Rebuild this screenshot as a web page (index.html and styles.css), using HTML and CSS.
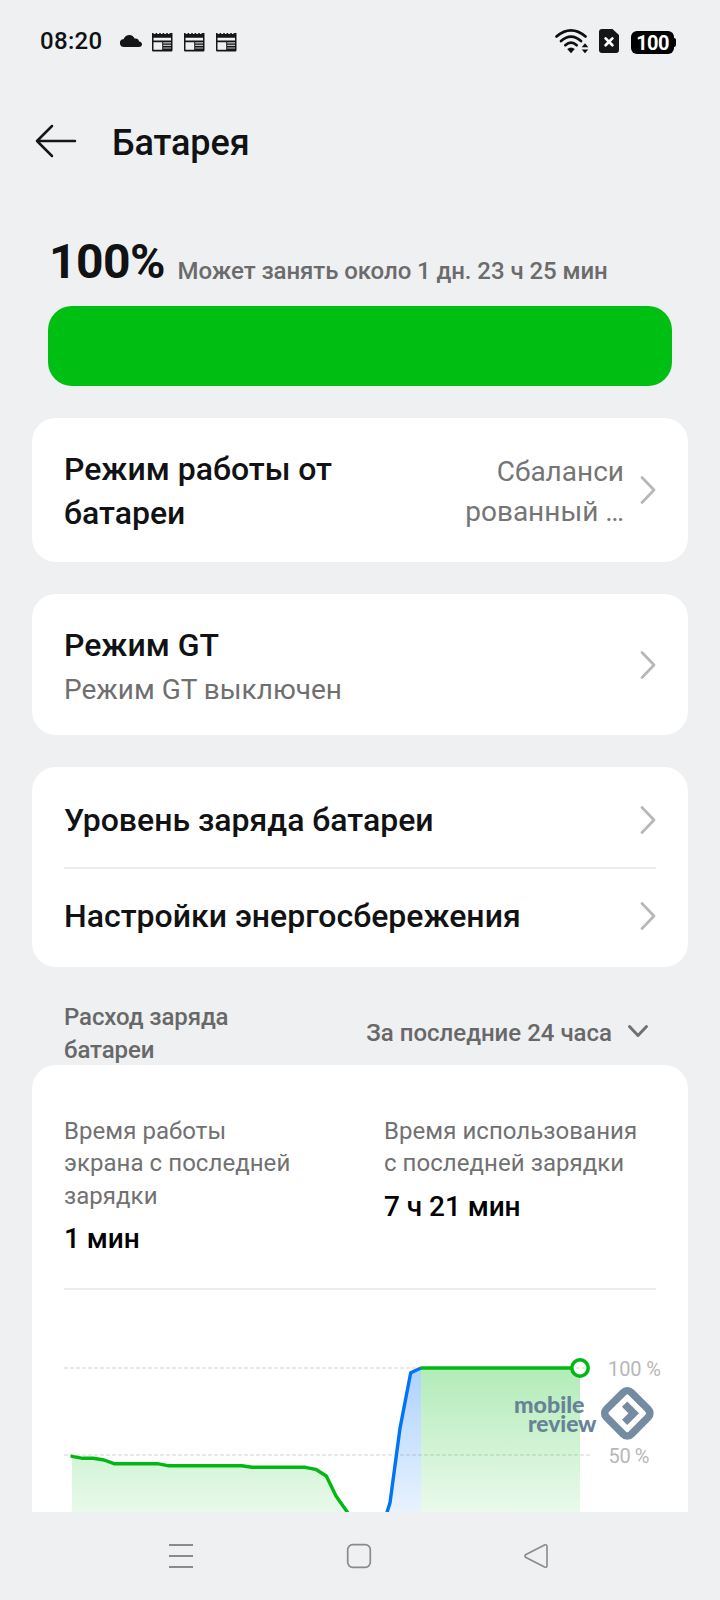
FILE: index.html
```html
<!DOCTYPE html>
<html lang="ru">
<head>
<meta charset="utf-8">
<title>Батарея</title>
<link rel="stylesheet" href="styles.css">
</head>
<body>
<svg class="defs" width="0" height="0" aria-hidden="true">
  <symbol id="news" viewBox="0 0 21 19">
    <path d="M0 0h1.600v1h2V0h1.600v1h2V0h1.600v1h1.800V0h1.600v1h2V0h1.600v1h1.800V0H20.500v17.200a1.200 1.200 0 0 1-1.200 1.200H1.200A1.200 1.200 0 0 1 0 17.200z" fill="#151617"/>
    <path d="M1.500 4.700h17.500v2.800H1.500zM1.500 9.200h8.700v7.600H1.500z" fill="#eff0f2"/>
    <path d="M11.200 9.800H19M11.200 12.400H19M11.200 15H19" stroke="#c4c5c6" stroke-width="1.200"/>
  </symbol>
  <symbol id="chevron" viewBox="0 0 16 28">
    <path d="M2 1.500 14 14 2 26.500" fill="none" stroke="#b7b7b8" stroke-width="2.700" stroke-linecap="round" stroke-linejoin="round"/>
  </symbol>
</svg>
<main class="screen">
  <header class="status">
    <span class="clock">08:20</span>
    <svg class="cloud" viewBox="0 0 22 12"><path d="M4 12a4 4 0 0 1-.3-8C4.600 1.500 7 0 9.300 0c2.700 0 4.500 1.500 5.300 3.600 2.600-.4 4.200 1 4.500 2.900C21 6.700 22 7.900 22 9.300 22 10.900 20.800 12 19 12z" fill="#151617"/></svg>
    <svg class="news"><use href="#news"/></svg>
    <svg class="news"><use href="#news"/></svg>
    <svg class="news"><use href="#news"/></svg>
    <span class="grow"></span>
    <svg class="wifi" viewBox="0 0 34 25">
      <g fill="none" stroke="#0d0e0f" stroke-width="2.700" stroke-linecap="round">
        <path d="M1.500 7.500Q16 -4.600 30.500 7.500"/><path d="M6 12Q16 3.300 26 12"/><path d="M10.300 16.200Q16 11.200 21.700 16.200"/>
      </g>
      <path d="M12.200 20Q16 16.800 19.800 20L16 24.200z" fill="#0d0e0f"/>
      <path d="M30 14.200 33.300 18.300H26.700zM30 24.200 33.300 20.400H26.700z" fill="#0d0e0f"/>
    </svg>
    <svg class="sim" viewBox="0 0 20 24"><path d="M3 0h10.500L20 6v15a3 3 0 0 1-3 3H3a3 3 0 0 1-3-3V3a3 3 0 0 1 3-3z" fill="#151617"/><path d="m6.600 9.400 6.800 6.800m0-6.800-6.800 6.800" stroke="#fff" stroke-width="2.700" stroke-linecap="round"/></svg>
    <span class="battery">100</span>
  </header>

  <div class="titlebar">
    <svg class="back" viewBox="0 0 42 34"><path d="M40 17H2M17 2 2 17l15 15" fill="none" stroke="#151617" stroke-width="2.500" stroke-linecap="round" stroke-linejoin="round"/></svg>
    <h1 class="title">Батарея</h1>
  </div>

  <section class="level">
    <div class="level-text"><span class="percent">100%</span><span class="remaining">Может занять около 1 дн. 23 ч 25 мин</span></div>
    <div class="level-bar"></div>
  </section>

  <section class="card card-mode">
    <div class="label">Режим работы от<br>батареи</div>
    <div class="value">Сбаланси<br>рованный …</div>
    <svg class="chevron"><use href="#chevron"/></svg>
  </section>

  <section class="card card-gt">
    <div class="label-group"><div class="label">Режим GT</div><div class="sub">Режим GT выключен</div></div>
    <svg class="chevron"><use href="#chevron"/></svg>
  </section>

  <section class="card card-list">
    <div class="row"><div class="label">Уровень заряда батареи</div><svg class="chevron"><use href="#chevron"/></svg></div>
    <div class="row"><div class="label">Настройки энергосбережения</div><svg class="chevron"><use href="#chevron"/></svg></div>
  </section>

  <div class="usage-head">
    <div class="usage-title">Расход заряда<br>батареи</div>
    <div class="period">За последние 24 часа</div>
    <svg class="drop" viewBox="0 0 22 14"><path d="m2.500 2.500 8.500 9 8.500-9" fill="none" stroke="#707172" stroke-width="3" stroke-linecap="round" stroke-linejoin="round"/></svg>
  </div>

  <section class="usage">
    <div class="stats">
      <div class="stat"><div class="stat-name">Время работы<br>экрана с последней<br>зарядки</div><div class="stat-value">1 мин</div></div>
      <div class="stat"><div class="stat-name">Время использования<br>с последней зарядки</div><div class="stat-value">7 ч 21 мин</div></div>
    </div>
    <svg class="chart" viewBox="32 1290 656 222">
      <defs>
        <linearGradient id="green" gradientUnits="userSpaceOnUse" x1="0" y1="1368" x2="0" y2="1512"><stop offset="0" stop-color="#00bd13" stop-opacity=".3"/><stop offset="1" stop-color="#00bd13" stop-opacity=".08"/></linearGradient>
        <linearGradient id="leftgreen" gradientUnits="userSpaceOnUse" x1="0" y1="1456" x2="0" y2="1512"><stop offset="0" stop-color="#00bd13" stop-opacity=".17"/><stop offset="1" stop-color="#00bd13" stop-opacity=".09"/></linearGradient>
        <linearGradient id="blue" gradientUnits="userSpaceOnUse" x1="0" y1="1368" x2="0" y2="1512"><stop offset="0" stop-color="#0073f7" stop-opacity=".32"/><stop offset="1" stop-color="#0073f7" stop-opacity=".09"/></linearGradient>
      </defs>
      <path d="M64 1368H590M64 1455H590" stroke="#e2e2e2" stroke-width="1.600" stroke-dasharray="4 2"/>
      <path d="M72 1456.300 82.700 1458.300H93.300L104 1460 114 1463.700H157.300L167.700 1465.700H241.700L252 1467.300H305.300L315.700 1469.300 326.300 1476 336 1496 347.700 1513H72z" fill="url(#leftgreen)"/>
      <path d="M386.500 1513 390 1502.700 400 1428.300 410.700 1372.700 421 1368V1513z" fill="url(#blue)"/>
      <path d="M421 1368H580V1513H421z" fill="url(#green)"/>
      <g fill="none" stroke-width="3.400" stroke-linejoin="round">
        <path d="M72 1456.300 82.700 1458.300H93.300L104 1460 114 1463.700H157.300L167.700 1465.700H241.700L252 1467.300H305.300L315.700 1469.300 326.300 1476 336 1496 348 1513" stroke="#00b812" stroke-linecap="round"/>
        <path d="M386.500 1514 390 1502.700 400 1428.300 410.700 1372.700 421 1368" stroke="#0073f7"/>
        <path d="M420.500 1368H580" stroke="#00b812"/>
      </g>
      <circle cx="580" cy="1368" r="8.200" fill="#fff" stroke="#00b812" stroke-width="3.500"/>
      <path d="M576 1368h4m2 0h4" stroke="#e5e5e5" stroke-width="1.400"/>
      <text class="axis" x="608" y="1376" textLength="53">100 %</text>
      <text class="axis" x="608.500" y="1463" textLength="41">50 %</text>
      <g class="brand">
        <text x="514" y="1412.700" textLength="70.500" lengthAdjust="spacingAndGlyphs">mobile</text>
        <text x="528" y="1431.500" textLength="68.500" lengthAdjust="spacingAndGlyphs">review</text>
        <rect x="609.700" y="1395.700" width="35.200" height="35.200" rx="5.500" transform="rotate(45 627.300 1413.300)" fill="#fff" stroke="#748ba1" stroke-width="7.500"/>
        <path d="m624.600 1404.200 9.100 9.100-9.100 9.100" fill="none" stroke="#748ba1" stroke-width="7.500"/>
      </g>
    </svg>
  </section>

  <nav class="nav">
    <svg class="nav-icon" viewBox="0 0 26 26"><path d="M1 2h24M1 13h24M1 24h24" stroke="#898a8c" stroke-width="1.900"/></svg>
    <svg class="nav-icon" viewBox="0 0 26 26"><rect x="1.700" y="1.700" width="22.600" height="22.600" rx="5" fill="none" stroke="#898a8c" stroke-width="1.700"/></svg>
    <svg class="nav-icon" viewBox="0 0 26 26"><path d="M3 11.500 21.500 2Q24 1 24 3.500V22.500Q24 25 21.500 24L3 14.500Q.800 13 3 11.500z" fill="none" stroke="#898a8c" stroke-width="1.600"/></svg>
  </nav>
</main>
</body>
</html>
```
FILE: styles.css
```css
* { box-sizing: border-box; }
body { margin: 0; background: #eff0f2; color: #111213; font-family: Roboto, "Noto Sans", sans-serif; }
.defs { position: absolute; }
.screen { width: 720px; height: 1600px; display: flex; flex-direction: column; overflow: hidden; }
svg { display: block; flex: none; }

.status { height: 82px; padding: 0 46px 0 40px; display: flex; align-items: center; }
.clock { font-size: 24px; font-weight: 500; width: 80px; letter-spacing: .3px; }
.cloud { width: 22px; height: 12px; margin-right: 10px; }
.news { width: 21px; height: 19px; margin: 2px 11px 0 0; }
.grow { flex: 1; }
.wifi { width: 34px; height: 25px; margin-right: 10px; }
.sim { width: 20px; height: 24px; margin-right: 12px; }
.battery { position: relative; width: 43px; height: 23px; margin-top: 2px; border-radius: 6px; background: #000; color: #fff; font-size: 20px; font-weight: 700; line-height: 24px; text-align: center; letter-spacing: -.6px; }
.battery::after { content: ""; position: absolute; right: -2px; top: 7px; width: 3px; height: 9px; border-radius: 0 2px 2px 0; background: #000; }

.titlebar { height: 119px; padding: 0 35px; display: flex; align-items: center; }
.back { width: 42px; height: 34px; margin: 0 35px 1px 0; }
.title { margin: 2px 0 0; font-size: 36px; font-weight: 500; line-height: 44px; letter-spacing: -.1px; }

.level { height: 217px; padding: 33px 48px 0; }
.level-text { height: 72px; display: flex; align-items: baseline; }
.percent { font-size: 48px; font-weight: 700; line-height: 56px; width: 129.500px; padding-left: 1px; letter-spacing: -.5px; }
.remaining { position: relative; top: 1px; color: #6b6b6c; font-size: 24px; font-weight: 500; white-space: nowrap; letter-spacing: -.07px; }
.level-bar { height: 80px; border-radius: 24px; background: #00bf13; }

.card { margin: 0 32px 32px; padding: 0 32px; border-radius: 24px; background: #fff; display: flex; align-items: center; }
.card-mode { height: 144px; }
.card-gt { height: 141px; }
.card-list { height: 200px; flex-direction: column; align-items: stretch; }
.label { font-size: 32px; font-weight: 500; line-height: 44.500px; white-space: nowrap; }
.label-group, .card-mode .label { flex: 1; padding-top: 2px; }
.label-group { padding-top: 6px; }
.value { color: #757575; font-size: 28px; line-height: 40.500px; text-align: right; margin: 4px 16px 0 0; }
.sub { color: #6f6f70; font-size: 28px; line-height: 45px; }
.chevron { width: 16px; height: 28px; }
.row { height: 100px; padding-top: 5px; display: flex; align-items: center; justify-content: space-between; }
.row .label { padding-top: 2px; }
.row + .row { padding: 0 0 5px; border-top: 2px solid #ececed; }

.usage-head { height: 66px; padding: 3px 71px 0 64px; display: flex; align-items: center; color: #686869; font-size: 24px; font-weight: 500; line-height: 32.500px; }
.usage-title { flex: 1; letter-spacing: -.1px; }
.period { margin-right: 15px; }
.drop { width: 22px; height: 14px; margin-bottom: 5px; }

.usage { height: 447px; margin: 0 32px; border-radius: 24px 24px 0 0; background: #fff; overflow: hidden; }
.stats { height: 225px; margin: 0 32px; padding-top: 50px; display: grid; grid-template-columns: 320px 1fr; border-bottom: 2px solid #ececed; }
.stat-name { color: #717172; font-size: 24px; line-height: 32.300px; white-space: nowrap; letter-spacing: .05px; }
.stat-value { color: #000; font-size: 28px; font-weight: 500; line-height: 40px; margin-top: 7px; letter-spacing: -.05px; }
.chart { width: 656px; height: 222px; }
.axis { font-size: 20px; fill: #b7b7b7; }
.brand { font-family: Lato, sans-serif; font-size: 22.500px; font-weight: 900; fill: #668397; }

.nav { height: 88px; padding: 0 171px 0 168px; display: flex; align-items: center; justify-content: space-between; }
.nav-icon { width: 26px; height: 26px; }
```
